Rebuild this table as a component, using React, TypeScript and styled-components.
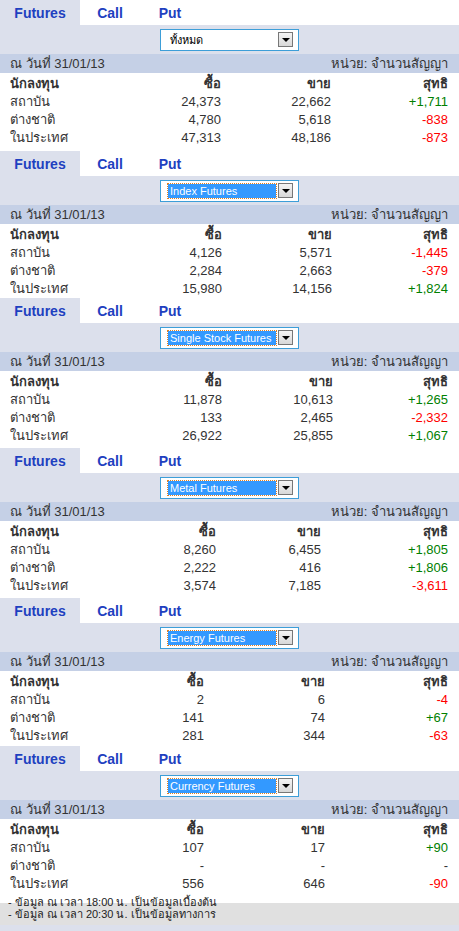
import React from "react";
import styled, { createGlobalStyle } from "styled-components";

const GlobalStyle = createGlobalStyle`
  html, body {
    margin: 0;
    padding: 0;
    background: #fff;
  }
  body {
    font-family: Tahoma, "Liberation Sans", "Noto Sans", sans-serif;
    font-size: 13px;
    color: #333;
  }
`;

const Page = styled.div`
  width: 459px;
  display: flex;
  flex-direction: column;
`;

const Block = styled.section<{ $tail: number }>`
  display: flex;
  flex-direction: column;
  padding-bottom: ${(p) => p.$tail}px;
`;

const TabRow = styled.div`
  height: 25px;
  display: flex;
`;

const Tab = styled.div<{ $active?: boolean; $w: number }>`
  width: ${(p) => p.$w}px;
  height: 25px;
  display: flex;
  align-items: center;
  justify-content: center;
  background: ${(p) => (p.$active ? "#dce0ec" : "#fff")};
  color: #1e40c0;
  font-family: "Liberation Sans", Arial, sans-serif;
  font-weight: bold;
  font-size: 14px;
`;

const SelectRow = styled.div`
  height: 29px;
  background: #dce0ec;
  display: flex;
  align-items: center;
  justify-content: center;
`;

const SelectBox = styled.div`
  width: 139px;
  height: 22px;
  box-sizing: border-box;
  border: 1px solid #3d9ed8;
  background: #fff;
  display: flex;
  align-items: center;
  padding: 0 5px 0 7px;
  gap: 2px;
`;

const SelectValue = styled.div<{ $hl?: boolean }>`
  flex: 1;
  height: 14px;
  line-height: 14px;
  font-size: 11px;
  padding-left: 2px;
  white-space: nowrap;
  overflow: hidden;
  color: ${(p) => (p.$hl ? "#fff" : "#000")};
  background: ${(p) => (p.$hl ? "#3399ff" : "transparent")};
  outline: ${(p) => (p.$hl ? "1px dotted #e08020" : "none")};
`;

const DropButton = styled.div`
  width: 13px;
  height: 13px;
  border: 1px solid #777;
  background: linear-gradient(#f4f4f4, #d8d8d8);
  display: flex;
  align-items: center;
  justify-content: center;
  &::after {
    content: "";
    border-left: 4px solid transparent;
    border-right: 4px solid transparent;
    border-top: 4px solid #000;
  }
`;

const DateBar = styled.div`
  height: 19px;
  background: #c5d0e6;
  display: flex;
  align-items: center;
  justify-content: space-between;
  padding: 0 11px 0 10px;
`;

const Row = styled.div<{ $buy: number; $sell: number; $head?: boolean }>`
  height: 18px;
  display: grid;
  grid-template-columns: 1fr 80px ${(p) => p.$sell - p.$buy}px ${(p) =>
      448 - p.$sell}px;
  align-items: center;
  padding: 0 11px 0 10px;
  font-weight: ${(p) => (p.$head ? "bold" : "normal")};
  & > :not(:first-child) {
    text-align: right;
  }
`;

const Cell = styled.span<{ $tone?: "up" | "down" }>`
  color: ${(p) =>
    p.$tone === "up" ? "#008000" : p.$tone === "down" ? "#ff0000" : "inherit"};
`;

// first footnote sits low, its text running over the shaded line below
const Note = styled.div`
  height: 12px;
  box-sizing: border-box;
  padding: 5px 0 0 8px;
  line-height: 12px;
  font-size: 11px;
  color: #222;
  white-space: nowrap;
  z-index: 1;
`;

const ShadedNote = styled.div`
  height: 22px;
  display: flex;
  align-items: center;
  padding-left: 8px;
  font-size: 11px;
  color: #222;
  background: #e0e0e0;
`;

const BottomStrip = styled.div`
  height: 7px;
  background: #dce0ec;
`;

type Line = [string, string, string, string];

interface BlockData {
  select: string;
  hl: boolean;
  buy: number;
  sell: number;
  tail: number;
  rows: Line[];
}

const blocks: BlockData[] = [
  {
    select: "ทั้งหมด",
    hl: false,
    buy: 221,
    sell: 331,
    tail: 6,
    rows: [
      ["สถาบัน", "24,373", "22,662", "+1,711"],
      ["ต่างชาติ", "4,780", "5,618", "-838"],
      ["ในประเทศ", "47,313", "48,186", "-873"],
    ],
  },
  {
    select: "Index Futures",
    hl: true,
    buy: 222,
    sell: 332,
    tail: 2,
    rows: [
      ["สถาบัน", "4,126", "5,571", "-1,445"],
      ["ต่างชาติ", "2,284", "2,663", "-379"],
      ["ในประเทศ", "15,980", "14,156", "+1,824"],
    ],
  },
  {
    select: "Single Stock Futures",
    hl: true,
    buy: 222,
    sell: 333,
    tail: 5,
    rows: [
      ["สถาบัน", "11,878", "10,613", "+1,265"],
      ["ต่างชาติ", "133", "2,465", "-2,332"],
      ["ในประเทศ", "26,922", "25,855", "+1,067"],
    ],
  },
  {
    select: "Metal Futures",
    hl: true,
    buy: 216,
    sell: 321,
    tail: 5,
    rows: [
      ["สถาบัน", "8,260", "6,455", "+1,805"],
      ["ต่างชาติ", "2,222", "416", "+1,806"],
      ["ในประเทศ", "3,574", "7,185", "-3,611"],
    ],
  },
  {
    select: "Energy Futures",
    hl: true,
    buy: 204,
    sell: 325,
    tail: 3,
    rows: [
      ["สถาบัน", "2", "6", "-4"],
      ["ต่างชาติ", "141", "74", "+67"],
      ["ในประเทศ", "281", "344", "-63"],
    ],
  },
  {
    select: "Currency Futures",
    hl: true,
    buy: 204,
    sell: 325,
    tail: 0,
    rows: [
      ["สถาบัน", "107", "17", "+90"],
      ["ต่างชาติ", "-", "-", "-"],
      ["ในประเทศ", "556", "646", "-90"],
    ],
  },
];

function tone(v: string) {
  if (v.startsWith("+")) return "up" as const;
  if (v.startsWith("-") && v.length > 1) return "down" as const;
  return undefined;
}

function FuturesBlock({ data, last }: { data: BlockData; last?: boolean }) {
  return (
    <Block $tail={data.tail}>
      <TabRow>
        <Tab $active $w={80}>Futures</Tab>
        <Tab $w={60}>Call</Tab>
        <Tab $w={60}>Put</Tab>
      </TabRow>
      <SelectRow>
        <SelectBox>
          <SelectValue $hl={data.hl}>{data.select}</SelectValue>
          <DropButton />
        </SelectBox>
      </SelectRow>
      <DateBar>
        <span>ณ วันที่ 31/01/13</span>
        <span>หน่วย: จำนวนสัญญา</span>
      </DateBar>
      <Row $buy={data.buy} $sell={data.sell} $head>
        <span>นักลงทุน</span>
        <span>ซื้อ</span>
        <span>ขาย</span>
        <span>สุทธิ</span>
      </Row>
      {data.rows.map((r) => (
        <Row key={r[0]} $buy={data.buy} $sell={data.sell}>
          <Cell>{r[0]}</Cell>
          <Cell>{r[1]}</Cell>
          <Cell>{r[2]}</Cell>
          <Cell $tone={tone(r[3])}>{r[3]}</Cell>
        </Row>
      ))}
      {last && (
        <>
          <Note>- ข้อมูล ณ เวลา 18:00 น. เป็นข้อมูลเบื้องต้น</Note>
          <ShadedNote>- ข้อมูล ณ เวลา 20:30 น. เป็นข้อมูลทางการ</ShadedNote>
          <BottomStrip />
        </>
      )}
    </Block>
  );
}

export default function App() {
  return (
    <>
      <GlobalStyle />
      <Page>
        {blocks.map((b, i) => (
          <FuturesBlock key={b.select} data={b} last={i === blocks.length - 1} />
        ))}
      </Page>
    </>
  );
}
